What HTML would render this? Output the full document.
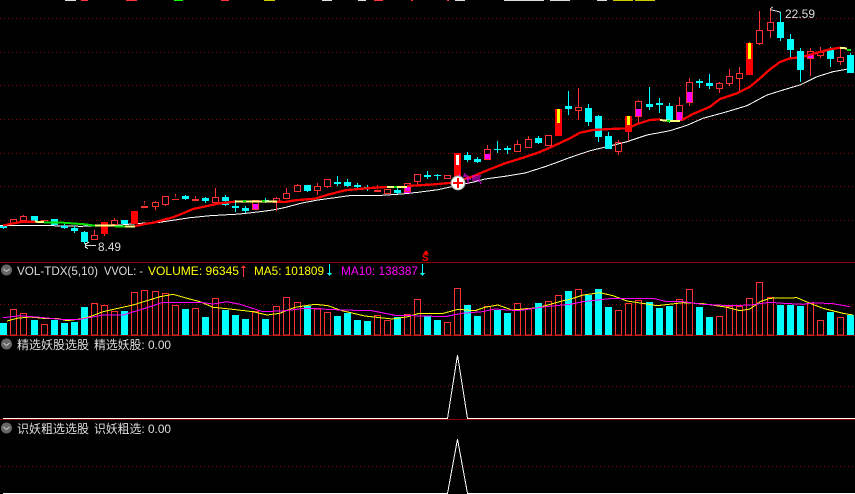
<!DOCTYPE html>
<html><head><meta charset="utf-8"><style>
html,body{margin:0;padding:0;background:#000;width:855px;height:494px;overflow:hidden}
svg{display:block}
text{font-family:"Liberation Sans","Noto Sans CJK SC",sans-serif;font-size:12px}
</style></head><body>
<svg width="855" height="494" viewBox="0 0 855 494" shape-rendering="crispEdges">
<rect width="855" height="494" fill="#000"/>
<!-- top text remnants -->
<g>
<rect x="65" y="0" width="11" height="1" fill="#ddd"/><rect x="81" y="0" width="7" height="1" fill="#f33"/><rect x="126" y="0" width="11" height="1" fill="#f33"/><rect x="174" y="0" width="9" height="1" fill="#0f0"/><rect x="221" y="0" width="8" height="1" fill="#f33"/><rect x="264" y="0" width="11" height="1" fill="#cc0"/>
<rect x="322" y="0" width="10" height="1" fill="#ddd"/><rect x="358" y="0" width="8" height="1" fill="#ddd"/><rect x="374" y="0" width="9" height="1" fill="#f33"/><rect x="411" y="0" width="2" height="1" fill="#f33"/><rect x="447" y="0" width="2" height="1" fill="#f33"/><rect x="455" y="0" width="10" height="1" fill="#ddd"/><rect x="504" y="0" width="40" height="1" fill="#ddd"/><rect x="550" y="0" width="20" height="1" fill="#ddd"/>
<rect x="597" y="0" width="10" height="1" fill="#ddd"/><rect x="613" y="0" width="20" height="1" fill="#cc0"/><rect x="635" y="0" width="20" height="1" fill="#cc0"/>
</g>
<!-- grid -->
<path d="M0 18.5H855M0 52.5H855M0 85.5H855M0 119.5H855M0 153.5H855M0 186.5H855M0 220.5H855M0 304.5H855M0 386.5H855M0 466.5H855" stroke="#8a0000" stroke-width="1" stroke-dasharray="1 3" fill="none"/>
<path d="M0 262.5H855M0 335.5H855M0 419.5H855" stroke="#8f0000" stroke-width="1" fill="none"/>
<!-- white MA -->
<polyline fill="none" stroke="#fff" stroke-width="1" points="0,225.7 33,225.3 80,226.3 100,226 120,225 140,223.3 157,222.7 170,220.7 190,217.7 210,215.7 240,214 260,211.7 273,210 285,207.5 302,203 318,200 342,196.7 352,195.3 382,195.3 402,194 418,192.3 438,189.7 458,185.3 475,181.7 485,179 505,176.3 525,173 545,166.7 558,162 570,157.5 590,150.7 607,146.7 627,141.7 647,135 670,130.7 687,125.3 703,118.3 727,111.7 747,105.7 767,95 783,90 800,85 817,76.7 833,71.7 848,69"/>
<!-- magenta fills -->
<path fill="#f0f" d="M252 204h7v6h-7zM404 187h7v6h-7zM484 154h7v6h-7zM635 109h7v8h-7zM676 112h7v9h-7zM686 92h7v11h-7zM807 55h7v4h-7z"/>
<!-- hollow candles -->
<path fill="none" stroke="#ff3232" stroke-width="1" d="M10.5 219.5h6v4h-6zM20.5 216.5h6v4h-6zM23.5 215v1M41.5 220.5h6v2h-6zM91.5 235.5h6v4h-6zM94.5 230v5M111.5 220.5h6v4h-6zM114.5 218v2M152.5 202.5h6v4h-6zM155.5 201v1M155.5 207v3M162.5 196.5h6v8h-6zM165.5 205v1M212.5 197.5h6v5h-6zM215.5 188v9M215.5 203v1M252.5 200.5h6v9h-6zM273.5 198.5h6v4h-6zM276.5 197v1M276.5 203v8M283.5 193.5h6v5h-6zM286.5 188v5M294.5 185.5h6v6h-6zM297.5 184v1M314.5 186.5h6v4h-6zM317.5 183v3M317.5 191v4M324.5 179.5h6v7h-6zM327.5 187v1M384.5 189.5h6v4h-6zM404.5 183.5h6v8h-6zM414.5 174.5h6v7h-6zM417.5 182v3M444.5 175.5h6v3h-6zM484.5 149.5h6v10h-6zM487.5 145v4M514.5 144.5h6v7h-6zM517.5 140v4M525.5 139.5h6v8h-6zM528.5 136v3M545.5 135.5h6v10h-6zM575.5 107.5h6v3h-6zM578.5 88v19M578.5 111v9M615.5 142.5h6v9h-6zM618.5 140v2M618.5 152v3M635.5 101.5h6v15h-6zM638.5 100v1M638.5 117v6M676.5 105.5h6v15h-6zM679.5 97v8M686.5 82.5h6v20h-6zM689.5 78v4M689.5 103v3M716.5 83.5h6v5h-6zM719.5 82v1M719.5 89v4M726.5 76.5h6v7h-6zM729.5 69v7M729.5 84v2M736.5 73.5h6v5h-6zM739.5 67v6M739.5 79v13M756.5 30.5h6v13h-6zM759.5 11v19M759.5 44v1M767.5 22.5h6v8h-6zM770.5 8v14M770.5 31v7M807.5 51.5h6v7h-6zM810.5 48v3M810.5 59v17M817.5 52.5h6v3h-6zM820.5 47v5M820.5 56v2M837.5 57.5h6v4h-6zM840.5 47v10M840.5 62v3"/>
<!-- red wicks/thin -->
<path fill="#ff3232" d="M141 206h7v2h-7zM144 201h1v5zM172 199h7v1h-7zM175 194h1v5zM192 199h7v2h-7zM195 196h1v7zM374 190h7v2h-7zM377 185h1v8zM104 234h1v2h-1zM628 132h1v9h-1zM749 42h1v1h-1z"/>
<!-- red solid -->
<path fill="#f00" d="M101 222h7v12h-7zM131 211h7v13h-7zM454 153h7v24h-7zM555 109h7v27h-7zM625 116h7v16h-7zM746 43h7v32h-7z"/>
<path fill="#fff" d="M456 155h3v10h-3z"/>
<path fill="#ff0" d="M557 109h3v14h-3zM627 116h3v9h-3zM748 43h3v16h-3z"/>
<!-- cyan wicks -->
<path fill="none" stroke="#0ff" stroke-width="1" d="M3.5 225v4M64.5 224v5M74.5 226v7M84.5 231v13M185.5 195v5M205.5 197v6M225.5 195v11M235.5 200v12M245.5 206v7M265.5 198v5M307.5 185v7M337.5 176v10M347.5 179v8M357.5 183v6M367.5 185v6M397.5 186v8M427.5 171v8M437.5 174v6M467.5 152v10M477.5 157v6M497.5 141v12M507.5 146v8M538.5 136v8M568.5 91v24M588.5 104v22M598.5 115v27M608.5 132v4M649.5 87v23M659.5 98v15M669.5 103v20M699.5 79v9M709.5 74v15M780.5 12v29M790.5 34v24M800.5 48v34M830.5 47v20M850.5 53v3"/>
<!-- cyan bodies -->
<path fill="#0ff" d="M0 226h7v2H0zM31 216h7v5h-7zM51 219h7v6h-7zM61 226h7v2h-7zM71 228h7v3h-7zM81 232h7v10h-7zM121 220h7v4h-7zM182 196h7v3h-7zM202 198h7v3h-7zM222 197h7v4h-7zM222 203h7v2h-7zM232 206h7v2h-7zM242 208h7v3h-7zM262 200h7v2h-7zM304 185h7v6h-7zM334 182h7v2h-7zM344 182h7v4h-7zM354 185h7v2h-7zM364 187h7v1h-7zM394 190h7v3h-7zM424 175h7v2h-7zM434 175h7v1h-7zM464 155h7v5h-7zM474 159h7v3h-7zM494 149h7v1h-7zM504 148h7v2h-7zM535 138h7v5h-7zM565 106h7v3h-7zM585 108h7v14h-7zM595 116h7v21h-7zM605 136h7v13h-7zM646 104h7v3h-7zM656 103h7v2h-7zM666 106h7v14h-7zM696 81h7v2h-7zM706 83h7v3h-7zM777 22h7v16h-7zM787 39h7v11h-7zM827 50h7v9h-7zM847 55h7v18h-7z"/>
<!-- red MA -->
<polyline fill="none" stroke="#f00" stroke-width="2.2" points="3,225.5 10,224 23,221.7 35,221.7"/>
<polyline fill="none" stroke="#ffff80" stroke-width="2" points="35,221.7 44,222"/>
<polyline fill="none" stroke="#0d0" stroke-width="2" points="44,222.7 63,222.7 85,224.3 95,225.7"/>
<polyline fill="none" stroke="#ffff80" stroke-width="2" points="95,225.7 115,225.7"/>
<polyline fill="none" stroke="#0d0" stroke-width="2" points="115,226.7 125,226.7"/>
<polyline fill="none" stroke="#ffff80" stroke-width="2" points="125,226.7 135,226.7"/>
<polyline fill="none" stroke="#f00" stroke-width="2.3" points="135,226 145,224 155,222.3 163,220 173,217.3 183,213.3 193,209 207,206 220,203.3 235,201.7"/>
<polyline fill="none" stroke="#ffff80" stroke-width="2" points="235,201.7 277,201.7"/>
<rect x="243" y="200" width="3" height="2" fill="#0d0"/><rect x="262" y="200" width="3" height="2" fill="#0d0"/>
<polyline fill="none" stroke="#f00" stroke-width="2.3" points="277,201.7 285,202 295,200.3 315,198.7 328,194.7 345,190.3 355,189.3 375,187.7 387,187"/>
<polyline fill="none" stroke="#ffff80" stroke-width="2" points="387,187 407,187"/>
<rect x="394" y="186" width="3" height="2" fill="#0d0"/>
<polyline fill="none" stroke="#f00" stroke-width="2.3" points="407,186 435,184.3 452,182.7 472,176.7 488,170 505,163.3 518,159.3 538,152.7 552,146.7 570,138.3 580,132.7 593,130 610,129 628,128.3 637,124 650,120 660,119.3"/>
<polyline fill="none" stroke="#ffff80" stroke-width="2" points="660,120 667,120.7 680,121"/>
<rect x="667" y="120" width="3" height="2" fill="#0d0"/>
<polyline fill="none" stroke="#f00" stroke-width="2.3" points="682,120 693,114 710,106.7 720,99 737,93.3 750,86.7 760,78.3 770,69.3 780,62 790,58.3 797,57.7 803,56.7 817,52.7 830,49.3 840,47.7"/>
<polyline fill="none" stroke="#ffff80" stroke-width="2" points="840,47.7 847,48.5"/>
<rect x="847" y="49" width="4" height="2" fill="#0d0"/>
<path fill="#0ff" d="M797 51h7v19h-7z"/>
<!-- buy marker -->
<path fill="none" stroke="#f0f" stroke-width="1" d="M459.5 174v10M456 179h7M463 176h5v8M465 173v3M466 179h5M472 176h9M472 178h8M472 180h8M479 180l2 4"/>
<circle cx="458" cy="183" r="7" fill="#fff" shape-rendering="auto"/>
<circle cx="458" cy="183" r="7" fill="none" stroke="#999" shape-rendering="auto"/>
<path fill="none" stroke="#f00" stroke-width="2" d="M458 178v10M453 183h10"/>
<!-- labels -->
<path fill="none" stroke="#ddd" stroke-width="1" d="M85.5 243v5M85 245.5h11M86 244l3-2M86 247l2 2"/>
<text x="98" y="251" fill="#ddd" shape-rendering="auto" textLength="23" lengthAdjust="spacingAndGlyphs">8.49</text>
<path fill="none" stroke="#ddd" stroke-width="1" d="M772 10l8 2v1M771 8l2-1M771 8v3"/>
<text x="785" y="18" fill="#ddd" textLength="30" lengthAdjust="spacingAndGlyphs">22.59</text>
<!-- S marker -->
<path fill="#f00" d="M426 250l3 4h-6z"/>
<text x="422" y="261" fill="#f00" style="font-size:10px;font-weight:bold">S</text>
<!-- volume bars hollow -->
<path fill="none" stroke="#ff3232" stroke-width="1" d="M10.500 309.500h6V335h-6zM20.500 313.500h6V335h-6zM41.500 324.500h6V335h-6zM91.500 303.500h6V335h-6zM101.500 305.500h6V335h-6zM111.500 311.500h6V335h-6zM131.500 292.500h6V335h-6zM141.500 290.500h6V335h-6zM152.500 291.500h6V335h-6zM162.500 293.500h6V335h-6zM172.500 305.500h6V335h-6zM192.500 308.500h6V335h-6zM212.500 298.500h6V335h-6zM252.500 311.500h6V335h-6zM273.500 306.500h6V335h-6zM283.500 297.500h6V335h-6zM294.500 302.500h6V335h-6zM314.500 308.500h6V335h-6zM324.500 312.500h6V335h-6zM374.500 315.500h6V335h-6zM384.500 320.500h6V335h-6zM404.500 314.500h6V335h-6zM414.500 299.500h6V335h-6zM444.500 322.500h6V335h-6zM454.500 288.500h6V335h-6zM484.500 306.500h6V335h-6zM514.500 303.500h6V335h-6zM525.500 308.500h6V335h-6zM545.500 301.500h6V335h-6zM555.500 295.500h6V335h-6zM575.500 289.500h6V335h-6zM615.500 310.500h6V335h-6zM625.500 303.500h6V335h-6zM635.500 300.500h6V335h-6zM676.500 299.500h6V335h-6zM686.500 289.500h6V335h-6zM716.500 316.500h6V335h-6zM726.500 306.500h6V335h-6zM736.500 306.500h6V335h-6zM746.500 298.500h6V335h-6zM756.500 282.500h6V335h-6zM767.500 297.500h6V335h-6zM807.500 303.500h6V335h-6zM817.500 320.500h6V335h-6zM837.500 317.500h6V335h-6z"/>
<path fill="#0ff" d="M0 323h7v12H0zM31 320h7v15h-7zM51 320h7v15h-7zM61 323h7v12h-7zM71 322h7v13h-7zM81 307h7v28h-7zM121 311h7v24h-7zM182 309h7v26h-7zM202 317h7v18h-7zM222 310h7v25h-7zM232 315h7v20h-7zM242 319h7v16h-7zM262 319h7v16h-7zM304 306h7v29h-7zM334 316h7v19h-7zM344 313h7v22h-7zM354 320h7v15h-7zM364 321h7v14h-7zM394 317h7v18h-7zM424 316h7v19h-7zM434 320h7v15h-7zM464 305h7v30h-7zM474 316h7v19h-7zM494 310h7v25h-7zM504 313h7v22h-7zM535 303h7v32h-7zM565 291h7v44h-7zM585 295h7v40h-7zM595 289h7v46h-7zM605 307h7v28h-7zM646 302h7v33h-7zM656 308h7v27h-7zM666 306h7v29h-7zM696 307h7v28h-7zM706 317h7v18h-7zM777 305h7v30h-7zM787 305h7v30h-7zM797 306h7v29h-7zM827 312h7v23h-7zM847 315h7v20h-7z"/>
<!-- volume MAs -->
<polyline fill="none" stroke="#ff0" stroke-width="1" points="7,321 17,318.3 30,317 43,318.3 57,318.3 67,320.7 80,319 90,316.7 103,311.7 133,305 160,296.7 173,294.3 187,298.3 200,301.7 213,307.3 230,309 253,311.7 267,315 280,313.3 285,311 295,307.3 315,304.3 328,305.7 342,310.7 365,316 392,319 408,316.7 418,313.7 442,313.7 458,309.3 475,310.7 485,307.3 498,305 512,310 538,307.7 562,301 570,299.3 583,295 600,292.7 613,295.700 627,301 647,304 657,305.7 683,302.7 703,303.7 727,307.3 740,310.7 750,309 760,301.7 770,298.3 797,297.7 810,303.3 823,308.3 843,313.3 853,315"/>
<polyline fill="none" stroke="#f0f" stroke-width="1" points="3,317.7 20,315.7 40,317.3 60,319.3 80,319.3 103,315 123,315 143,309 163,302.3 200,302.3 213,304 227,301.7 240,304.3 263,311.7 285,310.7 305,308.3 342,310 372,310.7 395,315.3 425,316 445,316.7 462,313.3 482,311.7 495,309 518,310.7 545,306.7 570,304.3 583,301.7 600,299.7 613,298.3 653,298.3 667,301.7 683,301.7 703,304.3 730,305.7 750,305 770,302.3 783,303.3 803,304.3 813,302.7 833,303.7 850,306.7"/>
<!-- triangles -->
<path fill="none" stroke="#fff" stroke-width="1" d="M3 418.500H447.500L457.500 355L467.500 418.500H855"/>
<path fill="none" stroke="#fff" stroke-width="1" d="M3 493.500H447.500L457.500 439L467.500 493.500H855"/>
<!-- icons -->
<g shape-rendering="auto">
<circle cx="6.500" cy="270" r="5.500" fill="#666"/><path d="M3.500 269l3 2.500 3-2.500" fill="none" stroke="#ccc" stroke-width="1"/>
<circle cx="6.500" cy="344" r="5.500" fill="#666"/><path d="M3.500 343l3 2.500 3-2.500" fill="none" stroke="#ccc" stroke-width="1"/>
<circle cx="6.500" cy="428" r="5.500" fill="#666"/><path d="M3.500 427l3 2.500 3-2.500" fill="none" stroke="#ccc" stroke-width="1"/>
</g>
<!-- headers -->
<g shape-rendering="auto">
<text x="17" y="275" fill="#ddd" textLength="81" lengthAdjust="spacingAndGlyphs">VOL-TDX(5,10)</text>
<text x="104" y="275" fill="#ddd" textLength="39" lengthAdjust="spacingAndGlyphs">VVOL: -</text>
<text x="148" y="275" fill="#ff0" textLength="91" lengthAdjust="spacingAndGlyphs">VOLUME: 96345</text>
<text x="254" y="275" fill="#ff0" textLength="70" lengthAdjust="spacingAndGlyphs">MA5: 101809</text>
<text x="341" y="275" fill="#f0f" textLength="77" lengthAdjust="spacingAndGlyphs">MA10: 138387</text>
<text x="17" y="349" fill="#ddd">精选妖股选股</text>
<text x="94" y="349" fill="#ddd" textLength="77" lengthAdjust="spacingAndGlyphs">精选妖股: 0.00</text>
<text x="17" y="433" fill="#ddd">识妖粗选选股</text>
<text x="94" y="433" fill="#ddd" textLength="77" lengthAdjust="spacingAndGlyphs">识妖粗选: 0.00</text>
</g>
<!-- header arrows -->
<path fill="#f33" d="M243 266h1v11h-1zM241 268l2.500-3 2.500 3z"/>
<path fill="#0ff" d="M329 264h1v9h-1zM327 273h5l-2.500 3zM422 264h1v9h-1zM420 273h5l-2.500 3z"/>
</svg>
</body></html>
